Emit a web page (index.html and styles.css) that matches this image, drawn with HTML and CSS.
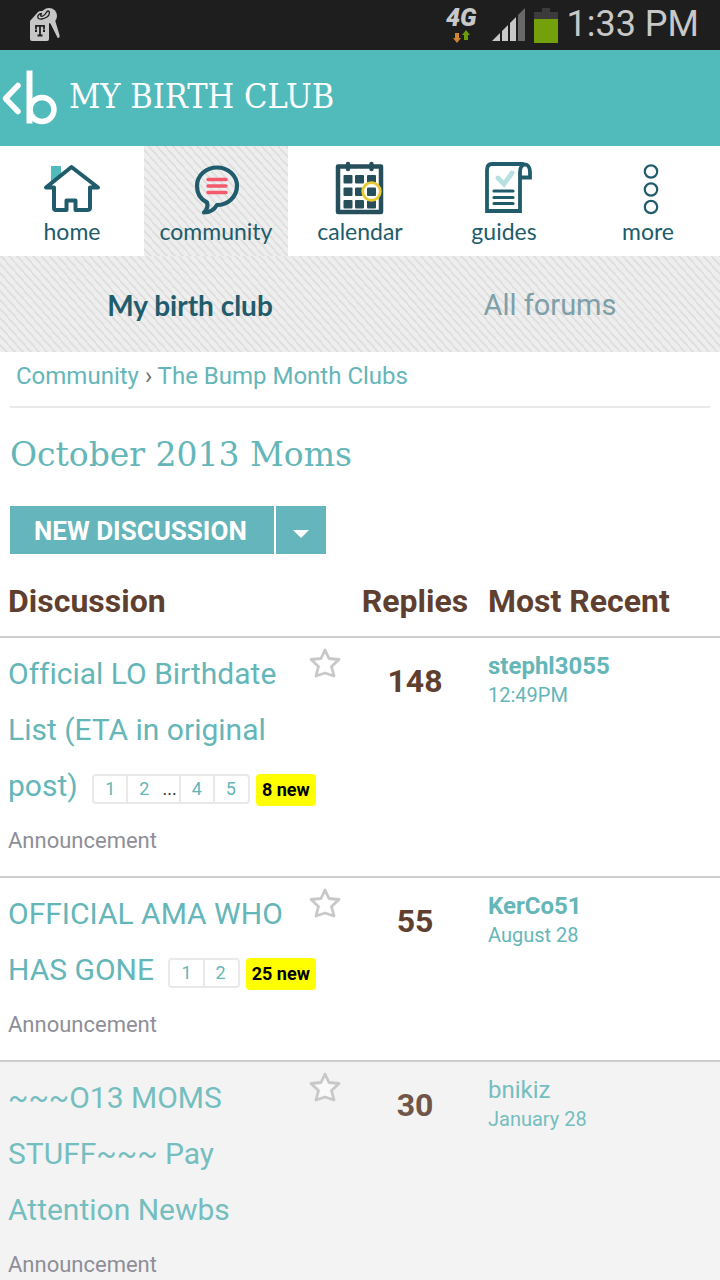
FILE: index.html
```html
<!DOCTYPE html>
<html lang="en">
<head>
<meta charset="utf-8">
<meta name="viewport" content="width=device-width, initial-scale=1">
<title>My Birth Club</title>
<link rel="stylesheet" href="styles.css">
</head>
<body>
<div class="app">
  <div class="status">
    <svg class="status-keys" width="30" height="36" viewBox="0 0 30 36" aria-hidden="true">
      <path d="M0 14 8 5q1-1 3-1h3l5 9v19a2 2 0 0 1-2 2H2a2 2 0 0 1-2-2z" fill="#c6c6c6"/>
      <circle cx="19" cy="9" r="8" fill="#c6c6c6"/>
      <path d="M19 14l6-1 4.500 15v2.500l-2 .5z" fill="#c6c6c6"/>
      <path d="M19.500 16 27 31" stroke="#1e1e1e" stroke-width="1" fill="none"/>
      <path d="M12 6.500C9 6.500 7 9 8 11s6 1 9-1 3-6 1-6-2 4-5 5-3-1-1-2.500" stroke="#1e1e1e" stroke-width="1.300" fill="none"/>
      <path d="M6 22.500V18.800h8v3.700M10 19v9.500M7.500 28.500h5M5 24h2M13 24h2" stroke="#1e1e1e" stroke-width="1.800" fill="none"/>
    </svg>
    <div class="status-right">
      <div class="network"><span>4G</span>
        <svg width="18" height="13" viewBox="0 0 18 13" aria-hidden="true"><path d="M3 3h4v5h2l-4 5-4-5h2z" fill="#d08432"/><path d="M12 10h4V5h2l-4-5-4 5h2z" fill="#6d9b0a"/></svg>
      </div>
      <svg width="33" height="34" viewBox="0 0 33 34" aria-hidden="true"><path d="M0 33 8 25v8zM10 33V23l6-6v16zM18 33V15l6-6v24z" fill="#c8c8c8"/><path d="M26 33V7l7-7v33z" fill="#686868"/></svg>
      <svg class="battery" width="24" height="35" viewBox="0 0 24 35" aria-hidden="true"><path d="M0 4h8V0h8v4h8v8H0z" fill="#3b3b3b"/><path d="M0 11h24v24H0z" fill="#73a00b"/></svg>
      <time>1:33 PM</time>
    </div>
  </div>

  <header class="header">
    <a href="#" class="back" aria-label="Back">
      <svg width="58" height="56" viewBox="0 0 58 56" fill="none" stroke="#fff" aria-hidden="true"><path d="M18 15.500 5.500 28.500 18 41.500" stroke-width="5.500" stroke-linecap="round" stroke-linejoin="round"/><path d="M29.500 .5v53" stroke-width="6"/><circle cx="42" cy="39.500" r="12" stroke-width="5.500"/></svg>
    </a>
    <h1>MY BIRTH CLUB</h1>
  </header>

  <nav class="nav">
    <a href="#">
      <svg width="60" height="56" viewBox="0 0 60 56" aria-hidden="true"><path d="M9 5h10v9L9 22z" fill="#51babb"/><path d="M29.500 6 4 26.500h8V47q0 2 2 2h10.500V39.500h9V49H45q3 0 3-2V26.500h8z" fill="#fff" stroke="#205c6b" stroke-width="4" stroke-linejoin="round"/></svg>
      <span>home</span>
    </a>
    <a href="#" class="current">
      <svg width="60" height="56" viewBox="0 0 60 56" aria-hidden="true"><path d="M31 6.500c11 0 20 8 20 18.500S42 44 31 44c-3 5-7 7.500-13 7.500 3-3 4-7 3-10-6-3-10-9-10-16.500C11 14.500 20 6.500 31 6.500z" fill="none" stroke="#205c6b" stroke-width="4.200" stroke-linejoin="round"/><path d="M22 18.500h18M22 25h18M22 31.500h18" stroke="#f35a6b" stroke-width="3.500" stroke-linecap="round"/></svg>
      <span>community</span>
    </a>
    <a href="#">
      <svg width="60" height="56" viewBox="0 0 60 56" aria-hidden="true"><path d="M8 5.500h43V51H8z" fill="#fff" stroke="#264f5b" stroke-width="4.500" stroke-linejoin="round"/><path d="M18 3v5M41.500 3v5" stroke="#264f5b" stroke-width="4.500" stroke-linecap="round"/><g fill="#264f5b"><rect x="13.500" y="14" width="9" height="8.500" rx="1"/><rect x="25" y="14" width="9" height="8.500" rx="1"/><rect x="37" y="14" width="9" height="8.500" rx="1"/><rect x="13.500" y="26.500" width="9" height="8.500" rx="1"/><rect x="25" y="26.500" width="9" height="8.500" rx="1"/><rect x="13.500" y="39" width="9" height="8.500" rx="1"/><rect x="25" y="39" width="9" height="8.500" rx="1"/><rect x="37" y="39" width="9" height="8.500" rx="1"/></g><circle cx="41.500" cy="30.500" r="8.800" fill="#fff" stroke="#e9c931" stroke-width="2.800"/><rect x="37" y="26.500" width="9" height="8.500" rx="1" fill="#264f5b"/></svg>
      <span>calendar</span>
    </a>
    <a href="#">
      <svg width="60" height="56" viewBox="0 0 60 56" fill="none" stroke="#205c6b" stroke-width="3.800" stroke-linecap="round" aria-hidden="true"><path d="M49 3H18q-5 0-5 6v41h33V11c0-10 10-10 10 0v5.500H47"/><path d="M20 30h19M20 36.500h19M20 42.500h19" stroke-width="3.200"/><path d="m24 17 6 6 8-11" stroke="#b7e1e0" stroke-width="4.800"/></svg>
      <span>guides</span>
    </a>
    <a href="#">
      <svg width="60" height="56" viewBox="0 0 60 56" fill="none" stroke="#205c6b" stroke-width="2.200" aria-hidden="true"><circle cx="33" cy="10.500" r="6.200"/><circle cx="33" cy="28.500" r="6.200"/><circle cx="33" cy="46" r="6.200"/></svg>
      <span>more</span>
    </a>
  </nav>

  <nav class="subnav">
    <a href="#" class="selected">My birth club</a>
    <a href="#">All forums</a>
  </nav>

  <main>
    <div class="crumbs"><a href="#">Community</a> › <a href="#">The Bump Month Clubs</a></div>
    <h2>October 2013 Moms</h2>
    <div class="actions">
      <button type="button" class="new">NEW DISCUSSION</button>
      <button type="button" class="more" aria-label="More options"><svg width="16" height="8" viewBox="0 0 16 8" aria-hidden="true"><path d="M0 0h16L8 8z" fill="#fff"/></svg></button>
    </div>

    <table class="topics">
      <colgroup><col class="col-topic"><col class="col-replies"><col></colgroup>
      <thead><tr><th scope="col">Discussion</th><th scope="col" class="replies">Replies</th><th scope="col">Most Recent</th></tr></thead>
      <tbody>
        <tr>
          <td class="topic">
            <button type="button" class="star" aria-label="Bookmark"><svg width="32" height="32" viewBox="0 0 32 32" aria-hidden="true"><path d="m16 3 4 8.500 10 1-7.500 7 2.500 9.500-9-3-9 3 2.500-9.500-7.500-7 10-1z"/></svg></button>
            <a href="#" class="title">Official LO Birthdate List (ETA in original post)</a>
            <span class="pager"><a href="#">1</a><a href="#">2</a><i>...</i><a href="#">4</a><a href="#">5</a></span><strong class="fresh">8 new</strong>
            <div class="kind">Announcement</div>
          </td>
          <td class="count">148</td>
          <td class="recent"><a href="#" class="user">stephl3055</a><a href="#" class="when">12:49PM</a></td>
        </tr>
        <tr>
          <td class="topic">
            <button type="button" class="star" aria-label="Bookmark"><svg width="32" height="32" viewBox="0 0 32 32" aria-hidden="true"><path d="m16 3 4 8.500 10 1-7.500 7 2.500 9.500-9-3-9 3 2.500-9.500-7.500-7 10-1z"/></svg></button>
            <a href="#" class="title">OFFICIAL AMA WHO HAS GONE</a>
            <span class="pager"><a href="#">1</a><a href="#">2</a></span><strong class="fresh">25 new</strong>
            <div class="kind">Announcement</div>
          </td>
          <td class="count">55</td>
          <td class="recent"><a href="#" class="user">KerCo51</a><a href="#" class="when">August 28</a></td>
        </tr>
        <tr class="read">
          <td class="topic">
            <button type="button" class="star" aria-label="Bookmark"><svg width="32" height="32" viewBox="0 0 32 32" aria-hidden="true"><path d="m16 3 4 8.500 10 1-7.500 7 2.500 9.500-9-3-9 3 2.500-9.500-7.500-7 10-1z"/></svg></button>
            <a href="#" class="title">~~~O13 MOMS STUFF~~~ Pay Attention Newbs</a>
            <div class="kind">Announcement</div>
          </td>
          <td class="count">30</td>
          <td class="recent"><a href="#" class="user">bnikiz</a><a href="#" class="when">January 28</a></td>
        </tr>
      </tbody>
    </table>
  </main>
</div>
</body>
</html>
```
FILE: styles.css
```css
* { box-sizing: border-box; }
body { margin: 0; background: #fff; font-family: Roboto, "Liberation Sans", sans-serif; font-variant-ligatures: none; color: #6b6b6b; }
a { color: #64b6b8; text-decoration: none; }
button { margin: 0; padding: 0; border: 0; background: none; font: inherit; cursor: pointer; }
svg { display: block; flex: none; }

.app { height: 100vh; overflow: hidden; }

.status { display: flex; justify-content: space-between; align-items: center; height: 50px; padding: 0 21px 0 30px; background: #1e1e1e; color: #c8c8c8; }
.status-right { display: flex; align-items: center; gap: 9px; }
.network { display: flex; flex-direction: column; align-items: center; gap: 2px; padding-right: 6px; font-size: 25px; line-height: 20px; font-weight: 900; font-style: italic; }
.status-right time { font-size: 36px; line-height: 48px; font-weight: 400; padding-bottom: 2px; }

.header { display: flex; align-items: center; gap: 11px; height: 96px; background: #51babb; color: #fff; }
.header h1 { margin: 0; padding-bottom: 4px; font: 400 34px/40px "DejaVu Serif Condensed", "DejaVu Serif", serif; }

.nav { display: grid; grid-template-columns: repeat(5, 1fr); height: 110px; background: #fff; }
.nav a { display: flex; flex-direction: column; align-items: center; padding-top: 15px; color: #205c6b; font: 400 23px/28px Lato, sans-serif; }
.nav .current, .subnav { background: repeating-linear-gradient(48deg, #eee 0 4px, #e0e0e0 4px 6px); }
.subnav { display: grid; grid-template-columns: 38fr 34fr; height: 96px; padding-top: 2px; }
.subnav a { display: flex; align-items: center; justify-content: center; color: #7f9fa9; font-size: 29px; }
.subnav .selected { color: #205c6b; font: 700 28px/36px Lato, sans-serif; }

.crumbs { margin: 0 10px; padding: 8px 6px 14px; border-bottom: 2px solid #e9e9e9; font-size: 24px; line-height: 32px; }
h2 { margin: 0; padding: 24px 10px 28px; color: #64b6b8; font: 400 33px/46px "DejaVu Serif", serif; }
.actions { display: flex; gap: 2px; padding: 0 10px; }
.actions button { height: 48px; background: #64b5bc; color: #fff; }
.actions .new { padding: 2px 27px 0 24px; font-size: 26px; font-weight: 700; }
.actions .more { display: grid; place-items: center; width: 50px; padding-top: 8px; }

.topics { width: 100%; border-collapse: separate; border-spacing: 0; table-layout: fixed; }
.col-topic { width: 350px; }
.col-replies { width: 130px; }
th { padding: 26px 8px 14px; border-bottom: 2px solid #cecece; color: #5f3f30; font-size: 32px; line-height: 42px; font-weight: 700; text-align: left; }
th.replies { padding-left: 0; padding-right: 0; text-align: center; }
td { padding: 8px; border-bottom: 2px solid #cecece; vertical-align: top; }
.topic { padding-right: 30px; font-size: 30px; line-height: 56px; }
.star { float: right; width: 32px; height: 34px; margin-right: -21px; }
.star path { fill: #fff; fill-opacity: .5; stroke: #c8c8c8; stroke-width: 2.800; stroke-linejoin: round; }
.pager, .fresh { display: inline-flex; vertical-align: middle; font-size: 18px; line-height: 26px; }
.pager { margin: 2px 6px 0 7px; border: 2px solid #e9e9e9; border-radius: 4px; }
.pager a { padding: 0 11px; }
.pager a:last-child { padding-right: 12px; }
.pager a + a, .pager i + a { border-left: 2px solid #e9e9e9; }
.pager i { padding: 0 2px; color: #333; font-style: normal; }
.fresh { margin-top: 4px; padding: 0 6px; border-radius: 4px; background: #ff0; color: #000; line-height: 32px; font-weight: 700; }
.kind { color: #8e8e98; font-size: 22px; line-height: 54px; }
.count { padding-top: 15px; color: #5f3f30; font-size: 32px; line-height: 56px; font-weight: 700; text-align: center; }
.recent { padding-top: 14px; }
.recent a { display: block; font-size: 20px; line-height: 29px; }
.recent .user { font-size: 24px; font-weight: 700; }
.read td { background: #f3f3f3; }
.read a { color: #75bec0; }
.read .user { font-weight: 400; }
.read .count { color: #715548; }
```
